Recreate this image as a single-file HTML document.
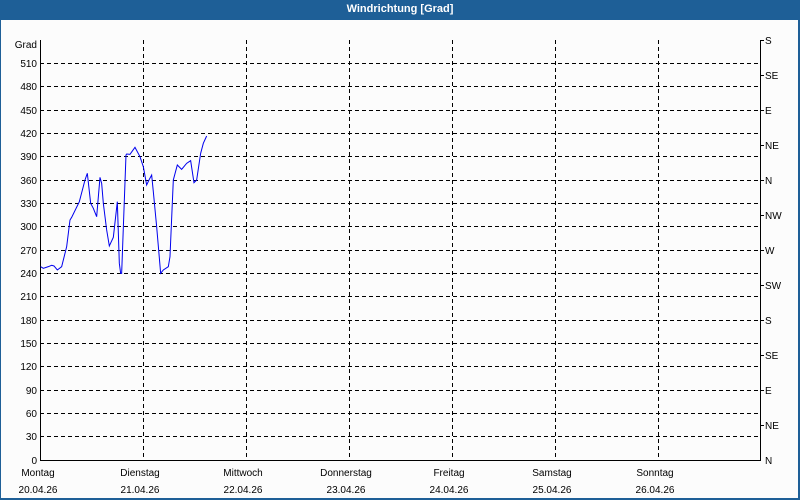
<!DOCTYPE html>
<html><head><meta charset="utf-8"><style>
html,body{margin:0;padding:0}
body{width:800px;height:500px;position:relative;background:#1e5f97;font-family:"Liberation Sans",sans-serif;overflow:hidden}
.inner{position:absolute;left:1px;top:20px;width:797px;height:478px;background:#fcfcfc}
.title{position:absolute;left:0;top:0;width:800px;height:20px;line-height:18px;text-align:center;color:#fff;font-weight:bold;font-size:11px}
svg{position:absolute;left:0;top:0}
text{font-family:"Liberation Sans",sans-serif;font-size:10px;fill:#000}
</style></head><body>
<div class="title">Windrichtung [Grad]</div>
<div class="inner"></div>
<svg width="800" height="500">
<g stroke="#000" stroke-width="1" stroke-dasharray="4,3" fill="none" shape-rendering="crispEdges">
<line x1="40" y1="63.5" x2="760" y2="63.5"/><line x1="40" y1="86.5" x2="760" y2="86.5"/><line x1="40" y1="110.5" x2="760" y2="110.5"/><line x1="40" y1="133.5" x2="760" y2="133.5"/><line x1="40" y1="156.5" x2="760" y2="156.5"/><line x1="40" y1="180.5" x2="760" y2="180.5"/><line x1="40" y1="203.5" x2="760" y2="203.5"/><line x1="40" y1="226.5" x2="760" y2="226.5"/><line x1="40" y1="250.5" x2="760" y2="250.5"/><line x1="40" y1="273.5" x2="760" y2="273.5"/><line x1="40" y1="296.5" x2="760" y2="296.5"/><line x1="40" y1="320.5" x2="760" y2="320.5"/><line x1="40" y1="343.5" x2="760" y2="343.5"/><line x1="40" y1="366.5" x2="760" y2="366.5"/><line x1="40" y1="390.5" x2="760" y2="390.5"/><line x1="40" y1="413.5" x2="760" y2="413.5"/><line x1="40" y1="436.5" x2="760" y2="436.5"/>
<line x1="143.5" y1="40" x2="143.5" y2="460"/><line x1="246.5" y1="40" x2="246.5" y2="460"/><line x1="349.5" y1="40" x2="349.5" y2="460"/><line x1="452.5" y1="40" x2="452.5" y2="460"/><line x1="555.5" y1="40" x2="555.5" y2="460"/><line x1="658.5" y1="40" x2="658.5" y2="460"/>
</g>
<g stroke="#000" stroke-width="1" fill="none" shape-rendering="crispEdges">
<polyline points="40.5,40 40.5,460.5 760.5,460.5 760.5,40"/>
<line x1="760" y1="40.5" x2="764" y2="40.5"/><line x1="760" y1="75.5" x2="764" y2="75.5"/><line x1="760" y1="110.5" x2="764" y2="110.5"/><line x1="760" y1="145.5" x2="764" y2="145.5"/><line x1="760" y1="180.5" x2="764" y2="180.5"/><line x1="760" y1="215.5" x2="764" y2="215.5"/><line x1="760" y1="250.5" x2="764" y2="250.5"/><line x1="760" y1="285.5" x2="764" y2="285.5"/><line x1="760" y1="320.5" x2="764" y2="320.5"/><line x1="760" y1="355.5" x2="764" y2="355.5"/><line x1="760" y1="390.5" x2="764" y2="390.5"/><line x1="760" y1="425.5" x2="764" y2="425.5"/>
</g>
<g transform="translate(30,120) scale(0.3333)">
<polyline fill="none" stroke="#0000ee" stroke-width="1" vector-effect="non-scaling-stroke" points="32,440 40,445 55,440 65,436 72,438 82,450 95,440 110,380 120,300 125,292 148,245 165,180 172,160 182,250 190,265 200,290 210,172 215,190 220,250 230,330 238,378 250,352 262,245 268,430 272,460 275,460 288,105 290,102 300,103 315,82 330,110 340,140 350,195 358,178 365,165 370,215 380,320 392,460 400,450 415,440 420,410 430,180 442,135 455,148 470,130 482,122 492,188 500,180 512,100 520,70 530,48"/>
</g>
<g text-anchor="end">
<text x="37" y="48">Grad</text>
<text x="37" y="67">510</text><text x="37" y="90">480</text><text x="37" y="114">450</text><text x="37" y="137">420</text><text x="37" y="160">390</text><text x="37" y="184">360</text><text x="37" y="207">330</text><text x="37" y="230">300</text><text x="37" y="254">270</text><text x="37" y="277">240</text><text x="37" y="300">210</text><text x="37" y="324">180</text><text x="37" y="347">150</text><text x="37" y="370">120</text><text x="37" y="394">90</text><text x="37" y="417">60</text><text x="37" y="440">30</text><text x="37" y="464">0</text>
</g>
<g>
<text x="765" y="44">S</text><text x="765" y="79">SE</text><text x="765" y="114">E</text><text x="765" y="149">NE</text><text x="765" y="184">N</text><text x="765" y="219">NW</text><text x="765" y="254">W</text><text x="765" y="289">SW</text><text x="765" y="324">S</text><text x="765" y="359">SE</text><text x="765" y="394">E</text><text x="765" y="429">NE</text><text x="765" y="464">N</text>
</g>
<g text-anchor="middle">
<text x="38" y="476">Montag</text><text x="38" y="493">20.04.26</text>
<text x="140" y="476">Dienstag</text><text x="140" y="493">21.04.26</text>
<text x="243" y="476">Mittwoch</text><text x="243" y="493">22.04.26</text>
<text x="346" y="476">Donnerstag</text><text x="346" y="493">23.04.26</text>
<text x="449" y="476">Freitag</text><text x="449" y="493">24.04.26</text>
<text x="552" y="476">Samstag</text><text x="552" y="493">25.04.26</text>
<text x="655" y="476">Sonntag</text><text x="655" y="493">26.04.26</text>
</g>
</svg>
</body></html>
